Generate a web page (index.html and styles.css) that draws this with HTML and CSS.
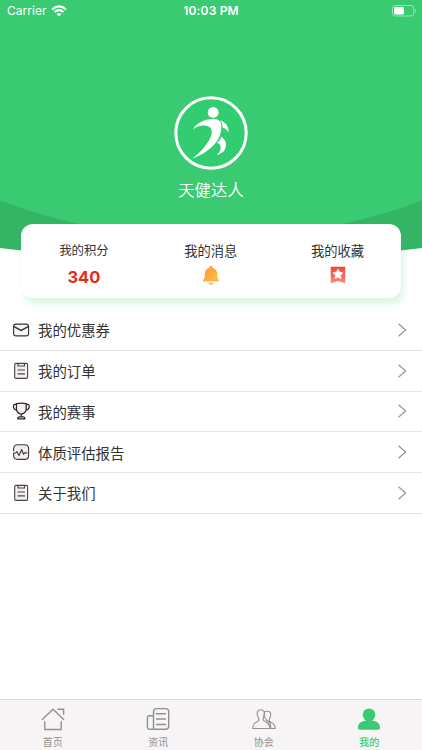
FILE: index.html
```html
<!DOCTYPE html>
<html lang="zh-CN">
<head>
<meta charset="utf-8">
<title>我的</title>
<link rel="stylesheet" href="styles.css">
</head>
<body>
<svg class="defs" width="0" height="0" aria-hidden="true">
  <symbol id="chevron" viewBox="0 0 10 14"><path d="M1.5 .8L8.6 7l-7.1 6.2" fill="none" stroke="#929292" stroke-width="1.15"/></symbol>
  <symbol id="clipboard" viewBox="0 0 18 18"><g fill="none" stroke="#494444" stroke-width="1.1" stroke-linecap="round" stroke-linejoin="round"><rect x="2.7" y="1.4" width="12.9" height="15" rx="1.2" fill="#f4efef"/><path d="M6 1.5V4h6.5V1.5M6 8h6.5M6 11.9h6.5"/></g></symbol>
</svg>
<main class="screen">
  <header class="hero">
    <svg class="backdrop" viewBox="0 0 422 280" aria-hidden="true">
      <path d="M0 0H422V248Q211 275 0 248Z" fill="#34b565"/>
      <path d="M0 0H422V200Q350 230 211 244Q72 230 0 200Z" fill="#3acb72"/>
    </svg>
    <div class="status">
      <div class="carrier"><span>Carrier</span>
        <svg width="16" height="12" viewBox="0 0 16 12"><g fill="none" stroke="#fff" stroke-width="2"><path d="M1 4.4Q8-1.7 15 4.4M3.5 7.1Q8 3.2 12.5 7.1"/></g><path d="M5.5 8.9Q8 6.9 10.5 8.9L8 11.5Z" fill="#fff"/></svg>
      </div>
      <div class="time">10:03 PM</div>
      <svg class="battery" width="25" height="12" viewBox="0 0 25 12"><rect x=".5" y=".5" width="21.3" height="10.5" rx="2.8" fill="none" stroke="#9ae5b7"/><rect x="2" y="2" width="10" height="7.5" rx="1.4" fill="#fff"/><path d="M23.2 4v4q1.1-.5 1.1-2t-1.1-2" fill="#9ae5b7"/></svg>
    </div>
    <div class="profile">
      <svg width="74" height="74" viewBox="0 0 74 74"><circle cx="37" cy="37" r="35.2" fill="#31cd70" stroke="#fff" stroke-width="3"/><g fill="#fff"><circle cx="39.2" cy="16.4" r="5.4"/><path d="M18.7 33.7C22 27 31 22.6 40 23C45 23.3 47.3 25.6 47.4 30C47.6 36.5 45.5 42 42 46.4C36.5 53.3 27.5 59.5 18 62.4C26 57.5 31.5 50 35.5 43.5C38 39 38.6 34.5 36.3 31.7C33.2 28.4 24.5 28.4 18.7 33.7Z"/><path d="M45.8 24.2C52 26.3 54.8 30.2 54.6 36.4C53 33.8 51 32.3 48.7 31.8C48.7 28.2 47.8 26 45.8 24.2ZM47.4 40.8C50.5 43 52.3 45.5 52 49.2C51.7 54.5 48 58 42.7 58.8C46 56 47.5 52.5 46.2 49.2C45.5 47.5 44.3 47.2 42.8 47C45.3 45.2 46.8 43.3 47.4 40.8Z"/></g></svg>
      <div class="name">天健达人</div>
    </div>
    <section class="card">
      <div class="stat points"><span>我的积分</span><strong>340</strong></div>
      <div class="stat"><span>我的消息</span>
        <svg width="18" height="20" viewBox="0 0 18 20"><defs><linearGradient id="bell" x2="1" y2="1"><stop stop-color="#ff922e"/><stop offset="1" stop-color="#ffc34d"/></linearGradient></defs><path d="M7.3 1.9V1.6a1.7 1.7 0 0 1 3.4 0v.3C14 2.6 15.2 4.9 15.2 8.3c0 3.5.5 4.7 1.6 5.9.7.7.4 1.4-.4 1.4H1.6c-.8 0-1.1-.7-.4-1.4 1.1-1.2 1.6-2.4 1.6-5.9 0-3.4 1.2-5.7 4.5-6.4Z" fill="url(#bell)"/><path d="M6.2 16.8h5.6q-.8 2-2.8 2t-2.8-2" fill="#ffb448"/></svg>
      </div>
      <div class="stat"><span>我的收藏</span>
        <svg width="16" height="18" viewBox="0 0 16 18"><defs><linearGradient id="save" x2="0" y2="1"><stop stop-color="#f34338"/><stop offset="1" stop-color="#ff8780"/></linearGradient></defs><path d="M.7.7h14.5v16.5L8 14.9.7 17.2Z" fill="url(#save)"/><path d="M8 3l1.6 3.1 3.4.6-2.4 2.5.5 3.5L8 11.2l-3.1 1.5.5-3.5L3 6.7l3.4-.6Z" fill="#fff" stroke="#fff" stroke-width=".5" stroke-linejoin="round"/></svg>
      </div>
    </section>
  </header>
  <nav class="menu">
    <div class="row"><svg class="icon" viewBox="0 0 18 18"><rect x="1.6" y="3.1" width="15" height="11.8" rx="2.4" fill="#f7f5f5" stroke="#333" stroke-width="1.1"/><path d="M2 5.7l7.1 3.7L16.2 5.7" fill="none" stroke="#333" stroke-width="1.3"/></svg><span>我的优惠券</span><svg class="arrow"><use href="#chevron"/></svg></div>
    <div class="row"><svg class="icon"><use href="#clipboard"/></svg><span>我的订单</span><svg class="arrow"><use href="#chevron"/></svg></div>
    <div class="row"><svg class="icon" viewBox="0 0 18 18"><g fill="none" stroke="#292626" stroke-width="1.25" stroke-linejoin="round"><path d="M4.4 1.6q5-.8 9.8 0v5.3c0 2.7-2.2 5.1-4.9 5.1S4.4 9.6 4.4 6.9Z" fill="#f4eeee"/><path d="M4.4 2.3H2.9Q1.4 2.3 1.4 4c.1 2.7 1.2 4 3.2 4.2M14.2 2.3h1.5q1.5 0 1.5 1.7c-.1 2.7-1.2 4-3.2 4.2M9.3 12v2.4M5.7 16.8q0-2 1.8-2h3.6q1.8 0 1.8 2Z"/></g></svg><span>我的赛事</span><svg class="arrow"><use href="#chevron"/></svg></div>
    <div class="row"><svg class="icon" viewBox="0 0 18 18"><rect x="1.6" y="1.8" width="15" height="14.6" rx="4" fill="#f2eded"/><g fill="none" stroke="#3b3737" stroke-width="1.1" stroke-linejoin="round"><path d="M1.6 8.2V5.8q0-4 4-4h7q4 0 4 4v6.6q0 4-4 4h-7q-4 0-4-4V10h2.2l1.2-1.3 2 3.8 2.7-6 1.8 4.7 1-1.3h2.7"/></g></svg><span>体质评估报告</span><svg class="arrow"><use href="#chevron"/></svg></div>
    <div class="row"><svg class="icon"><use href="#clipboard"/></svg><span>关于我们</span><svg class="arrow"><use href="#chevron"/></svg></div>
  </nav>
  <footer class="tabs">
    <div class="tab"><svg viewBox="0 0 24 24"><path d="M1 12.7L12 2.3l11 10.4M3.8 14.3v8.2h16.4v-8.2M16.6 2.2h6v5.5" fill="none" stroke="#929090" stroke-width="1.4"/></svg><span>首页</span></div>
    <div class="tab"><svg viewBox="0 0 24 24"><g fill="none" stroke="#929090" stroke-width="1.4" stroke-linecap="round"><path d="M7.5 22.3V4.6q0-3 3-3h9.2q3 0 3 3v14.7q0 3-3 3H3.9q-2.5 0-2.5-2.5v-9q0-2 2-2h4.1M10.5 6.7h9M10.5 12h9M10.5 17.5h9"/></g></svg><span>资讯</span></div>
    <div class="tab"><svg viewBox="0 0 24 24"><g fill="none" stroke="#929090" stroke-width="1.1" stroke-linejoin="round"><path d="M6.7 11.5C3.9 5.5 5.3 2.7 8.8 2.7s5.1 2.8 2.3 8.8c-.4 1.9.5 2.6 2.7 3.5 3 1.2 4 2.6 4 6.5H.8c0-4 .9-5.3 3.9-6.5 1.8-.8 2.6-1.6 2-3.5Z"/><path d="M12 5.4c1-1.4 5.7-1.8 6.6.8.6 2.2-.3 4.5-1.3 6.4-.5 1.5.3 2 1.9 2.8 2.8 1.1 3.9 2.3 3.9 6.1h-4.3c0-4-.7-6-2.8-7.2-1.5-.7-2.2-1.4-1.8-2.4M12.2 5.5c-.6 2.2.3 4.6 1.4 6.3"/></g></svg><span>协会</span></div>
    <div class="tab active"><svg viewBox="0 0 24 24"><circle cx="12" cy="7.7" r="6.3" fill="#3acb72"/><path d="M8.7 12.7h6.6v1c4.7.5 7.7 2.8 7.7 6.8 0 1.5-.7 2.2-2 2.2H3c-1.3 0-2-.7-2-2.2 0-4 3-6.3 7.7-6.8Z" fill="#3acb72"/></svg><span>我的</span></div>
  </footer>
</main>
</body>
</html>
```
FILE: styles.css
```css
* { box-sizing: border-box; }
body { margin: 0; background: #fff; color: #333; font-family: Inter, "Noto Sans CJK SC", sans-serif; }
.defs { position: absolute; }
svg { display: block; flex: none; }
.screen { width: 422px; height: 750px; display: flex; flex-direction: column; overflow: hidden; }
.hero { position: relative; height: 310px; }
.backdrop { position: absolute; inset: 0 0 auto; width: 422px; height: 280px; }
.status { position: relative; height: 22px; padding: 0 5px 0 7px; display: grid; grid-template-columns: 1fr auto 1fr; align-items: center; color: #fff; }
.carrier { display: flex; align-items: center; gap: 5px; font-size: 12px; line-height: 20px; letter-spacing: .02px; }
.time { margin: -1px 2px 0 0; font-size: 12px; font-weight: 600; letter-spacing: .17px; }
.carrier span { margin-top: -1px; }
.battery { justify-self: end; }
.profile { position: relative; height: 202px; padding-top: 74px; display: flex; flex-direction: column; align-items: center; }
.name { margin-top: 8px; color: #fff; font-size: 16.4px; line-height: 24px; font-weight: 350; }
.card { position: relative; height: 74px; margin: 0 21px 0 20.5px; border-radius: 12px; background: #fff; box-shadow: 3px 6px 6px rgba(58, 203, 114, .18); display: grid; grid-template-columns: repeat(3, 1fr); }
.stat { padding-top: 16.5px; display: flex; flex-direction: column; align-items: center; gap: 4px; font-size: 13.3px; line-height: 20px; }
.stat svg { margin-top: 1px; }
.points { font-size: 12.4px; }
.points strong { color: #e02d18; font-size: 16.5px; line-height: 24px; }
.menu { flex: 1; }
.row { height: 40.75px; padding: 0 15.5px 0 12px; border-bottom: 1px solid #e5e5e5; display: flex; align-items: center; font-size: 14.4px; }
.row span { margin: -.2px 0 0 8px; }
.icon { width: 18px; height: 18px; }
.arrow { width: 10px; height: 14px; margin-left: auto; }
.tabs { height: 51px; border-top: 1px solid #d9d9d9; background: #f6f4f5; display: grid; grid-template-columns: repeat(4, 1fr); }
.tab { padding-top: 7px; display: flex; flex-direction: column; align-items: center; gap: 3px; color: #929090; font-size: 10px; line-height: 16px; }
.tab svg { width: 24px; height: 24px; }
.active { color: #3acb72; font-weight: 500; }
```
